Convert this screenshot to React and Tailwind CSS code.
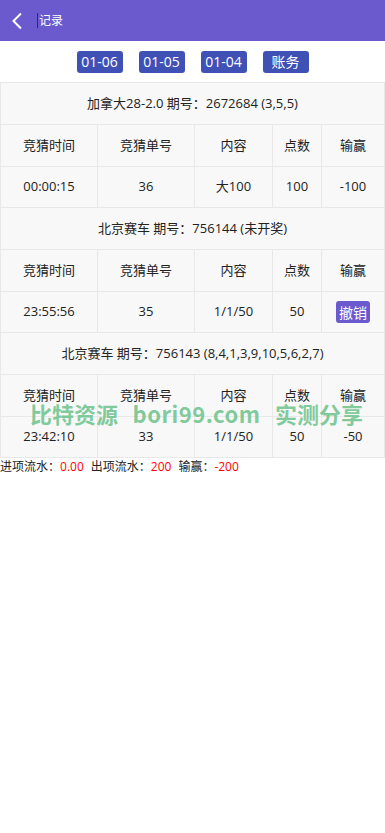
import React from "react";

const font = { fontFamily: '"Open Sans","Noto Sans CJK SC",sans-serif' };

function Group({ title, row }) {
  const heads = ["竞猜时间", "竞猜单号", "内容", "点数", "输赢"];
  return (
    <>
      <tr>
        <td colSpan={5} className="h-[42px] border border-[#e8e8e8] text-center">{title}</td>
      </tr>
      <tr>
        {heads.map((h) => (
          <td key={h} className="h-[42px] border border-[#e8e8e8] text-center">{h}</td>
        ))}
      </tr>
      <tr>
        {row.map((c, i) => (
          <td key={i} className="h-[41px] border border-[#e8e8e8] text-center">{c}</td>
        ))}
      </tr>
    </>
  );
}

export default function App() {
  return (
    <div className="relative w-[385px] min-h-[833px] overflow-hidden bg-white text-[13px] text-[#222]" style={font}>
      <div className="flex h-[41px] items-center bg-[#6a5acd] text-white">
        <svg width="12" height="18" viewBox="0 0 12 18" className="ml-[11px]">
          <path d="M10 1.5 L2.5 9 L10 16.5" fill="none" stroke="white" strokeWidth="2" />
        </svg>
        <div className="ml-[14px] h-[15px] w-px bg-[#333]" />
        <span className="ml-px text-[12px]">记录</span>
      </div>
      <div className="flex h-[41px] items-center justify-center gap-4">
        {["01-06", "01-05", "01-04", "账务"].map((t) => (
          <div key={t} className="flex h-[22px] w-[46px] items-center justify-center rounded-[3px] bg-[#3f51b5] text-[14px] text-white">
            {t}
          </div>
        ))}
      </div>
      <table className="w-full table-fixed border-collapse bg-[#f8f8f8]">
        <colgroup>
          <col className="w-[97px]" />
          <col className="w-[97px]" />
          <col className="w-[78px]" />
          <col className="w-[49px]" />
          <col />
        </colgroup>
        <tbody>
          <Group title="加拿大28-2.0 期号：2672684 (3,5,5)" row={["00:00:15", "36", "大100", "100", "-100"]} />
          <Group
            title="北京赛车 期号：756144 (未开奖)"
            row={[
              "23:55:56",
              "35",
              "1/1/50",
              "50",
              <span className="inline-flex h-[22px] w-[34px] items-center justify-center rounded-[3px] bg-[#6a5acd] text-[14px] text-white">撤销</span>,
            ]}
          />
          <Group title="北京赛车 期号：756143 (8,4,1,3,9,10,5,6,2,7)" row={["23:42:10", "33", "1/1/50", "50", "-50"]} />
        </tbody>
      </table>
      <div className="mt-[1px] text-[12px] leading-[16px]">
        进项流水：<span className="text-[#ff0000]">0.00</span>
        <span className="ml-[7px]">出项流水：</span>
        <span className="text-[#ff0000]">200</span>
        <span className="ml-[7px]">输赢：</span>
        <span className="text-[#ff0000]">-200</span>
      </div>
      <div
        className="pointer-events-none absolute left-[30px] top-[397px] flex w-[333px] justify-between whitespace-nowrap text-[22px] font-bold leading-[32px] text-[#6cc28a]/85"
        style={{ fontFamily: '"Noto Sans CJK SC","Open Sans",sans-serif' }}
      >
        <span>比特资源</span>
        <span className="tracking-[0.5px]">bori99.com</span>
        <span>实测分享</span>
      </div>
    </div>
  );
}
